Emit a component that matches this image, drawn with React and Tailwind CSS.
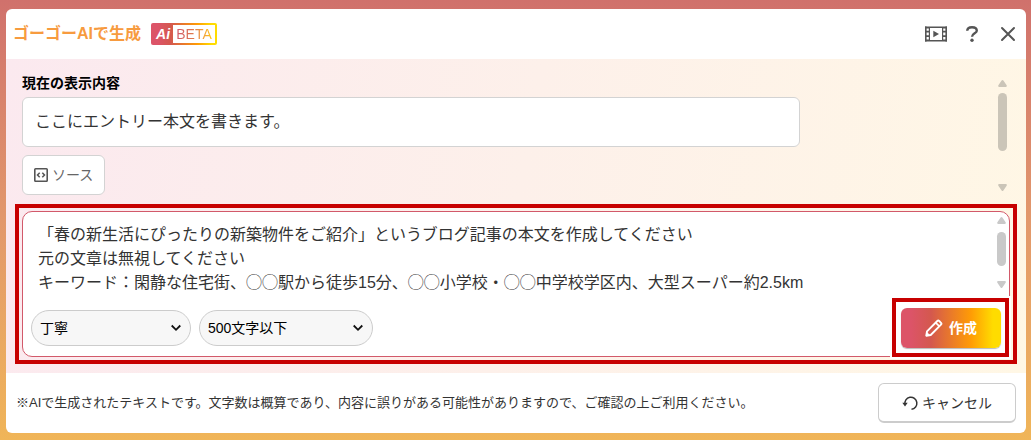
import React from "react";

function ScrollRail({ className, thumb, tone }) {
  return (
    <div aria-hidden="true" className={`flex w-[9px] shrink-0 flex-col items-center ${tone} ${className}`}>
      <svg className="h-[7px] w-[9px] shrink-0" viewBox="0 0 9 7" fill="currentColor">
        <path d="M4.5 0 Q5 0 5.4.6 L8.8 5.6 Q9 7 8 7 H1 Q0 7 .2 5.6 L3.6.6 Q4 0 4.5 0Z" />
      </svg>
      <div className={`w-[9px] rounded-full bg-current ${thumb}`} />
      <svg className="mt-auto h-[7px] w-[9px] shrink-0 rotate-180" viewBox="0 0 9 7" fill="currentColor">
        <path d="M4.5 0 Q5 0 5.4.6 L8.8 5.6 Q9 7 8 7 H1 Q0 7 .2 5.6 L3.6.6 Q4 0 4.5 0Z" />
      </svg>
    </div>
  );
}

function PillSelect({ label, options, width }) {
  return (
    <div className={`relative ${width}`}>
      <select
        aria-label={label}
        className="h-9 w-full appearance-none rounded-full border border-[#cccccc] bg-[#f7f7f7] pr-8 pl-2 text-sm text-black"
      >
        {options.map((o) => (
          <option key={o}>{o}</option>
        ))}
      </select>
      <svg
        aria-hidden="true"
        className="pointer-events-none absolute top-3.5 right-2.5 h-2 w-2.5"
        viewBox="0 0 10 8"
        fill="none"
        stroke="#111"
        strokeWidth="1.8"
      >
        <path d="M.7 1.5 5 5.8 9.3 1.5" />
      </svg>
    </div>
  );
}

function FilmIcon() {
  return (
    <svg className="h-4 w-[22px]" viewBox="0 0 22 16" fill="none" aria-hidden="true">
      <path d="M4 1.2H18M4 14.8H18" stroke="#555" strokeWidth="1.4" />
      <path d="M4.4 1V15M17.600 1V15" stroke="#555" strokeWidth="1.2" />
      <path d="M.8.5V15.5M21.2.5V15.5" stroke="#555" strokeWidth="1.6" />
      <path
        d="M0 1.5H4M0 5.6H4M0 10.2H4M0 14.5H4M18 1.5H22M18 5.6H22M18 10.2H22M18 14.5H22"
        stroke="#555"
        strokeWidth="1.8"
      />
      <path d="M8.3 4.800 14 8 8.3 11.200Z" fill="#555" />
    </svg>
  );
}

export default function App() {
  return (
    <div className="min-h-screen bg-linear-to-b from-[#d0716c] via-[#e2986b] to-[#f0b558] pt-[9px] pr-[5px] pb-[7px] pl-[6px] font-['Liberation_Sans','Noto_Sans_CJK_JP',sans-serif]">
      <div role="dialog" aria-labelledby="title" className="overflow-hidden rounded-md bg-white">
        <header className="flex h-[50px] items-center pr-2.5 pl-[7px]">
          <h1 id="title" className="text-base font-bold text-[#f79b3f]">
            ゴーゴーAIで生成
          </h1>
          <span className="ml-2.5 flex h-[22px] items-center rounded-xs bg-[linear-gradient(90deg,#dc5468_10%,#d4584e_30%,#ff9c05_70%,#ffdc00_92%)] p-0.5">
            <span className="w-5 text-center text-sm leading-4 font-bold text-white italic">Ai</span>
            <span className="flex h-[18px] w-[42px] items-center justify-center bg-white">
              <span className="bg-linear-to-r from-[#d0586a] via-[#e07a4a] to-[#ffc400] bg-clip-text text-sm leading-4 text-transparent">
                BETA
              </span>
            </span>
          </span>
          <div className="ml-auto flex items-center gap-3">
            <button type="button" aria-label="動画" className="flex h-8 w-6 items-center justify-center">
              <FilmIcon />
            </button>
            <button type="button" aria-label="ヘルプ" className="flex h-8 w-6 items-center justify-center">
              <svg className="h-4 w-3" viewBox="0 0 12 16" fill="none" aria-hidden="true">
                <path
                  d="M1.2 4.8C1.3 2.5 3.2 1.2 6 1.2s4.8 1.3 4.8 3.5C10.800 7.300 6 7.400 6 10.800"
                  stroke="#555"
                  strokeWidth="2.400"
                />
                <circle cx="6" cy="14.2" r="1.7" fill="#555" />
              </svg>
            </button>
            <button type="button" aria-label="閉じる" className="flex h-8 w-5 items-center justify-end">
              <svg className="size-4 shrink-0" viewBox="0 0 16 16" stroke="#555" strokeWidth="2" strokeLinecap="round" aria-hidden="true">
                <path d="M2 2 14 14M14 2 2 14" />
              </svg>
            </button>
          </div>
        </header>

        <main className="bg-linear-[100deg] from-[#fbe9ef] to-[#fff7e5] pb-[9px]">
          <section className="flex justify-between gap-4 pr-[19px] pb-[9px] pl-4">
            <div className="max-w-[778px] flex-1 pt-3.5">
              <label htmlFor="current" className="block text-sm leading-5 font-bold text-black">
                現在の表示内容
              </label>
              <input
                id="current"
                type="text"
                defaultValue="ここにエントリー本文を書きます。"
                className="mt-1 block h-[50px] w-full rounded-md border border-[#d3d3d3] bg-white px-3 pb-1 text-base text-[#333]"
              />
              <button
                type="button"
                className="mt-2 flex h-10 items-center gap-1 rounded-md border border-[#d3d3d3] bg-white px-[11px] text-sm text-[#666]"
              >
                <svg className="size-3.5" viewBox="0 0 14 14" fill="none" stroke="#555" aria-hidden="true">
                  <rect x=".8" y=".8" width="12.400" height="12.400" rx=".8" strokeWidth="1.6" />
                  <path d="M5.700 4.700 3.500 7l2.200 2.300M8.300 4.700 10.500 7 8.300 9.300" strokeWidth="1.5" />
                </svg>
                ソース
              </button>
            </div>
            <ScrollRail className="mt-[21px] mb-1" thumb="mt-1.5 h-[58px]" tone="text-[#cbc5b8]" />
          </section>

          <section className="mx-[9px] border-4 border-[#c70000] p-[3px]">
            <div className="rounded-[10px] border border-[#d2596a] bg-white">
              <div className="flex justify-between pr-[3px]">
                <textarea
                  aria-label="指示"
                  rows={3}
                  className="mt-[11px] block h-[73px] flex-1 resize-none overflow-hidden bg-transparent px-[15px] text-base leading-6 text-[#333]"
                  defaultValue={
                    "「春の新生活にぴったりの新築物件をご紹介」というブログ記事の本文を作成してください\n元の文章は無視してください\nキーワード：閑静な住宅街、◯◯駅から徒歩15分、◯◯小学校・◯◯中学校学区内、大型スーパー約2.5km"
                  }
                />
                <ScrollRail className="mt-[5px] mb-2" thumb="mt-2 h-[34px]" tone="text-[#c9c9c9]" />
              </div>
              <div className="flex items-center gap-2 px-2 pt-3 pb-2">
                <PillSelect label="文体" width="w-40" options={["丁寧", "カジュアル"]} />
                <PillSelect label="文字数" width="w-[174px]" options={["500文字以下", "1000文字以下"]} />
                <div className="relative ml-auto">
                  <div
                    aria-hidden="true"
                    className="pointer-events-none absolute -top-2.5 -right-2 -bottom-[9px] -left-[9px] border-4 border-[#c70000] bg-white shadow-[0_0_0_2px_#fff]"
                  />
                  <button
                    type="button"
                    className="relative flex h-10 w-[100px] items-center justify-center gap-1.5 rounded-md bg-[linear-gradient(90deg,#dc5468_10%,#d4584e_30%,#ff9c05_70%,#ffdc00_92%)] text-sm font-bold text-white shadow-[0_1px_1px_#bbb]"
                  >
                    <svg className="size-[18px]" viewBox="0 0 18 18" fill="none" stroke="#fff" aria-hidden="true">
                      <path
                        d="M1.300 16.700 2 12.300 12.300 2Q13.200 1.100 14.200 2L16 3.800Q16.900 4.800 16 5.700L5.700 16Z"
                        strokeWidth="1.900"
                        strokeLinejoin="round"
                      />
                      <path d="M10.700 3.600 14.400 7.300" strokeWidth="1.700" />
                      <path d="M1.300 16.700 1.700 13.300 4.700 16.300Z" fill="#fff" />
                    </svg>
                    作成
                  </button>
                </div>
              </div>
            </div>
          </section>
        </main>

        <footer className="flex items-center justify-between px-2.5 py-2.5">
          <p className="text-[13px] leading-4 text-[#333]">
            ※AIで生成されたテキストです。文字数は概算であり、内容に誤りがある可能性がありますので、ご確認の上ご利用ください。
          </p>
          <button
            type="button"
            className="flex h-10 w-[138px] shrink-0 items-center justify-center gap-1 rounded-md border border-b-2 border-[#cccccc] bg-white text-sm text-[#333]"
          >
            <svg className="size-4" viewBox="0 0 16 16" fill="none" aria-hidden="true">
              <path d="M3 9.500A6 6 0 1 1 9.500 14.200" stroke="#333" strokeWidth="1.500" />
              <path d="M.3 7.800H5.700L3 11.500Z" fill="#333" />
            </svg>
            キャンセル
          </button>
        </footer>
      </div>
    </div>
  );
}
